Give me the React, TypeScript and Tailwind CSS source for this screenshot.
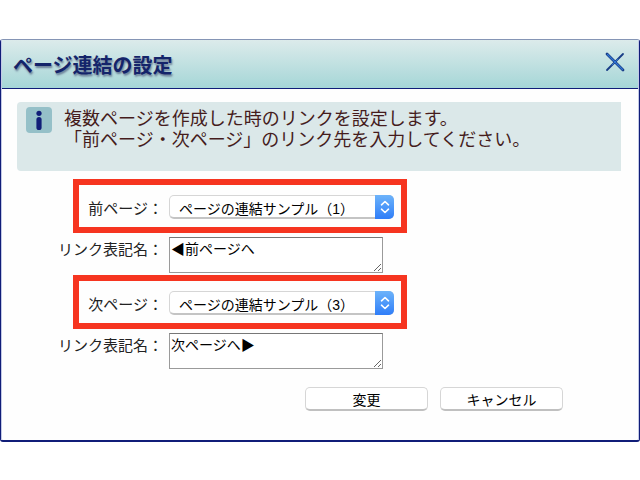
import { useState } from "react";

interface LinkFieldsProps {
  id: string;
  label: string;
  options: string[];
  defaultText: string;
}

const LinkFields = ({ id, label, options, defaultText }: LinkFieldsProps) => {
  const [page, setPage] = useState(options[0]);

  return (
    <div className="flex flex-col gap-1">
      <div className="ml-[71px] flex h-[54px] w-[334px] items-center gap-[6px] border-[6px] border-[#f63520] pt-[2px]">
        <label htmlFor={`${id}-page`} className="w-[84px] pt-[4px] text-right">
          {label}：
        </label>
        <div className="grid h-[24px] w-[225px]">
          <select
            id={`${id}-page`}
            value={page}
            onChange={(e) => setPage(e.target.value)}
            className="col-start-1 row-start-1 appearance-none rounded-[5px] border border-b-2 border-[#d6d6d6] border-b-[#c4c4c4] bg-white pt-[5px] pl-[9px] text-sm leading-[16px] text-black"
          >
            {options.map((option) => (
              <option key={option}>{option}</option>
            ))}
          </select>
          <span className="pointer-events-none col-start-1 row-start-1 flex w-[19px] items-center justify-center justify-self-end rounded-r-[5px] bg-linear-to-b from-[#6db3fa] to-[#2f7df8]">
            <svg
              className="h-[14px] w-[10px]"
              viewBox="0 0 10 14"
              fill="none"
              stroke="white"
              strokeWidth="1.6"
              strokeLinecap="round"
              strokeLinejoin="round"
            >
              <path d="M1.5 4.8 5 1.5l3.5 3.3M1.5 9.2 5 12.5l3.5-3.3" />
            </svg>
          </span>
        </div>
      </div>
      <div className="ml-[56px] flex gap-[6px]">
        <label
          htmlFor={`${id}-text`}
          className="w-[105px] pt-[3px] text-right leading-[20px]"
        >
          リンク表記名：
        </label>
        <textarea
          id={`${id}-text`}
          defaultValue={defaultText}
          className="h-[36px] w-[214px] resize overflow-hidden border border-[#9a9a9a] border-t-[#777777] bg-white px-px pt-px text-sm leading-[20px] text-black"
        />
      </div>
    </div>
  );
};

const buttonClass =
  "h-[24px] w-[123px] rounded-[5px] border border-b-2 border-[#d6d6d6] border-b-[#c0c0c0] bg-white pt-[3px] text-sm leading-[18px] text-black";

const App = () => {
  return (
    <div className="bg-white pt-[39px] font-['Liberation_Sans','Noto_Sans_CJK_JP',sans-serif]">
      <div
        role="dialog"
        aria-labelledby="dialog-title"
        className="rounded-[3px] border-x border-t border-b-2 border-[#101d78] border-t-[#8595b5] bg-[#fefefe]"
      >
        <div className="border-x border-[#c3c9e6]">
          <header className="flex h-[49px] items-center justify-between border-b border-[#101d78] bg-linear-to-b from-[#dcebeb] to-[#a5d6d7] pr-[13px] pl-[11px]">
            <h1
              id="dialog-title"
              className="pt-[3px] text-[20px] leading-[28px] font-bold text-[#14246a] [text-shadow:1px_2px_2px_#6b7f98]"
            >
              ページ連結の設定
            </h1>
            <button type="button" aria-label="閉じる" className="mb-[4px]">
              <svg
                className="h-[20px] w-[20px]"
                viewBox="0 0 20 20"
                fill="none"
                strokeLinecap="round"
              >
                <path d="M2 2l16 16" stroke="#183c86" strokeWidth="2.8" />
                <path d="M18 2 2 18" stroke="#183c86" strokeWidth="1.8" />
                <path d="M2.5 2.5l15 15" stroke="#2f74d4" strokeWidth="1.2" />
                <path d="M13 7l-6 6" stroke="#2f74d4" strokeWidth="1" />
              </svg>
            </button>
          </header>

          <section className="mt-[13px] mr-[17px] ml-[15px] flex h-[69px] gap-[12px] rounded-l-[4px] bg-[#dbe8e9] pt-[5px] pl-[9px]">
            <svg className="h-[26px] w-[26px] shrink-0" viewBox="0 0 26 26">
              <rect width="26" height="26" rx="4" fill="#95c0c8" />
              <circle cx="13" cy="6.3" r="2.6" fill="#101d78" />
              <rect x="10.4" y="10" width="5.2" height="13" rx="2.6" fill="#101d78" />
            </svg>
            <p className="pt-[2px] text-lg leading-[21px] text-[#451c1c]">
              複数ページを作成した時のリンクを設定します。
              <br />
              「前ページ・次ページ」のリンク先を入力してください。
            </p>
          </section>

          <form
            onSubmit={(e) => e.preventDefault()}
            className="pt-[8px] pb-[29px] text-[15px] text-[#222222]"
          >
            <div className="flex flex-col gap-[2px]">
              <LinkFields
                id="prev"
                label="前ページ"
                options={["ページの連結サンプル（1）"]}
                defaultText="◀前ページへ"
              />
              <LinkFields
                id="next"
                label="次ページ"
                options={["ページの連結サンプル（3）"]}
                defaultText="次ページへ▶"
              />
            </div>
            <div className="mt-[18px] ml-[303px] flex gap-[12px]">
              <button type="submit" className={buttonClass}>
                変更
              </button>
              <button type="button" className={buttonClass}>
                キャンセル
              </button>
            </div>
          </form>
        </div>
      </div>
    </div>
  );
};

export default App;
